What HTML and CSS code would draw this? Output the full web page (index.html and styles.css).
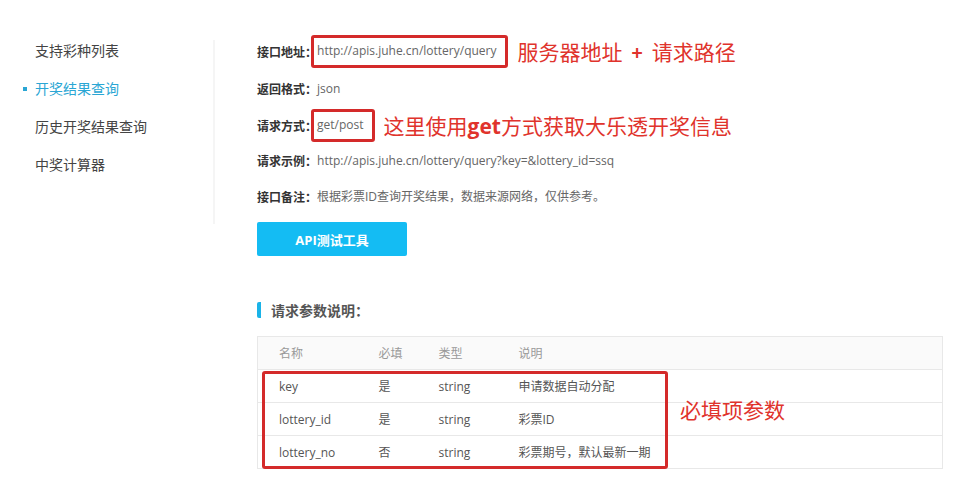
FILE: index.html
```html
<!DOCTYPE html>
<html lang="zh-CN">
<head>
<meta charset="utf-8">
<title>开奖结果查询</title>
<link rel="stylesheet" href="styles.css">
</head>
<body>
<div class="page">
  <aside class="sidebar">
    <ul class="nav">
      <li class="nav-item">支持彩种列表</li>
      <li class="nav-item active">开奖结果查询</li>
      <li class="nav-item">历史开奖结果查询</li>
      <li class="nav-item">中奖计算器</li>
    </ul>
  </aside>
  <main class="main">
    <div class="info-row r1">
      <span class="label">接口地址：</span>
      <span class="boxed">http://apis.juhe.cn/lottery/query</span>
      <span class="note note-url">服务器地址<span class="plus">+</span>请求路径</span>
    </div>
    <div class="info-row r2">
      <span class="label">返回格式：</span>
      <span class="value">json</span>
    </div>
    <div class="info-row r3">
      <span class="label">请求方式：</span>
      <span class="boxed">get/post</span>
      <span class="note note-method">这里使用<b class="note-b">get</b>方式获取大乐透开奖信息</span>
    </div>
    <div class="info-row r4">
      <span class="label">请求示例：</span>
      <span class="value">http://apis.juhe.cn/lottery/query?key=&amp;lottery_id=ssq</span>
    </div>
    <div class="info-row r5">
      <span class="label">接口备注：</span>
      <span class="value">根据彩票ID查询开奖结果，数据来源网络，仅供参考。</span>
    </div>
    <button class="btn">API测试工具</button>
    <h3 class="section-title">请求参数说明：</h3>
    <div class="table-wrap">
      <table class="params">
        <thead>
          <tr><th class="c1">名称</th><th class="c2">必填</th><th class="c3">类型</th><th>说明</th></tr>
        </thead>
        <tbody>
          <tr><td>key</td><td>是</td><td>string</td><td>申请数据自动分配</td></tr>
          <tr><td>lottery_id</td><td>是</td><td>string</td><td>彩票ID</td></tr>
          <tr><td>lottery_no</td><td>否</td><td>string</td><td>彩票期号，默认最新一期</td></tr>
        </tbody>
      </table>
      <div class="mark-box"></div>
      <div class="note note-required">必填项参数</div>
    </div>
  </main>
</div>
</body>
</html>
```
FILE: styles.css
```css
* { box-sizing: border-box; }
html, body { margin: 0; padding: 0; background: #fff; }
body {
  font-family: "Open Sans", "Noto Sans CJK SC", sans-serif;
  color: #333;
  width: 970px;
  height: 489px;
  overflow: hidden;
}
.page { display: flex; align-items: flex-start; }
.sidebar {
  width: 215px;
  margin-top: 40px;
  height: 184px;
  border-right: 2px solid #f5f5f5;
}
.nav { list-style: none; margin: 0; padding: 0; }
.nav-item {
  position: relative;
  height: 38px;
  line-height: 38px;
  padding-left: 35px;
  font-size: 14px;
  color: #444;
}
.nav-item:first-child { margin-top: -8px; }
.nav-item.active { color: #2aa6d4; }
.nav-item.active::before {
  content: "";
  position: absolute;
  left: 23px;
  top: 17px;
  width: 4px;
  height: 4px;
  background: #2aa6d4;
}
.main {
  flex: 1;
  padding-left: 42px;
  padding-top: 33px;
}
.info-row {
  display: flex;
  align-items: center;
  font-size: 12px;
  position: relative;
}
.r1 { height: 36px; }
.r2 { height: 38px; }
.r3 { height: 36px; }
.r4 { height: 35px; }
.r5 { height: 36px; }
.label {
  font-weight: bold;
  color: #333;
  font-family: "Noto Sans CJK SC", sans-serif;
}
.value { color: #666; }
.boxed {
  display: inline-flex;
  align-items: center;
  height: 33px;
  padding: 0 8px 1px 3px;
  border: 3px solid #d42a2a;
  border-radius: 3px;
  color: #666;
  margin-left: -6px;
}
.note {
  color: #e0332c;
  font-size: 21px;
  font-family: "Noto Sans CJK SC", sans-serif;
  font-weight: 400;
  white-space: nowrap;
}
.plus { margin: 0 9px; font-weight: bold; font-size: 19px; }
.note-url { margin-left: 10px; }
.note-method { margin-left: 9px; }
.note-b { font-weight: bold; font-family: "Open Sans", sans-serif; }
.btn {
  display: block;
  margin-top: 8px;
  width: 150px;
  height: 34px;
  border: none;
  border-radius: 2px;
  background: #14bcf3;
  color: #fff;
  font-family: "Open Sans", "Noto Sans CJK SC", sans-serif;
  font-size: 13px;
  font-weight: bold;
  padding: 0;
}
.section-title {
  margin: 46px 0 0 0;
  height: 16px;
  line-height: 16px;
  font-size: 14px;
  font-weight: bold;
  color: #555;
  padding-left: 10px;
  border-left: 4px solid #1ab3e8;
  border-radius: 2px;
  font-family: "Noto Sans CJK SC", sans-serif;
}
.table-wrap {
  position: relative;
  margin-top: 18px;
  width: 686px;
}
.params {
  width: 100%;
  border-collapse: collapse;
  font-size: 12px;
  border: 1px solid #e8e8e8;
}
.params th, .params td {
  height: 33px;
  padding: 0;
  text-align: left;
  font-weight: normal;
  border-bottom: 1px solid #e8e8e8;
}
.params th:first-child, .params td:first-child { padding-left: 21px; }
.params th { background: #fafafa; color: #999; }
.params td { color: #555; }
.c1 { width: 121px; }
.c2 { width: 60px; }
.c3 { width: 80px; }
.mark-box {
  position: absolute;
  left: 5px;
  top: 35px;
  width: 406px;
  height: 98px;
  border: 3px solid #d42a2a;
  border-radius: 3px;
}
.note-required {
  position: absolute;
  left: 423px;
  top: 58px;
}
```
